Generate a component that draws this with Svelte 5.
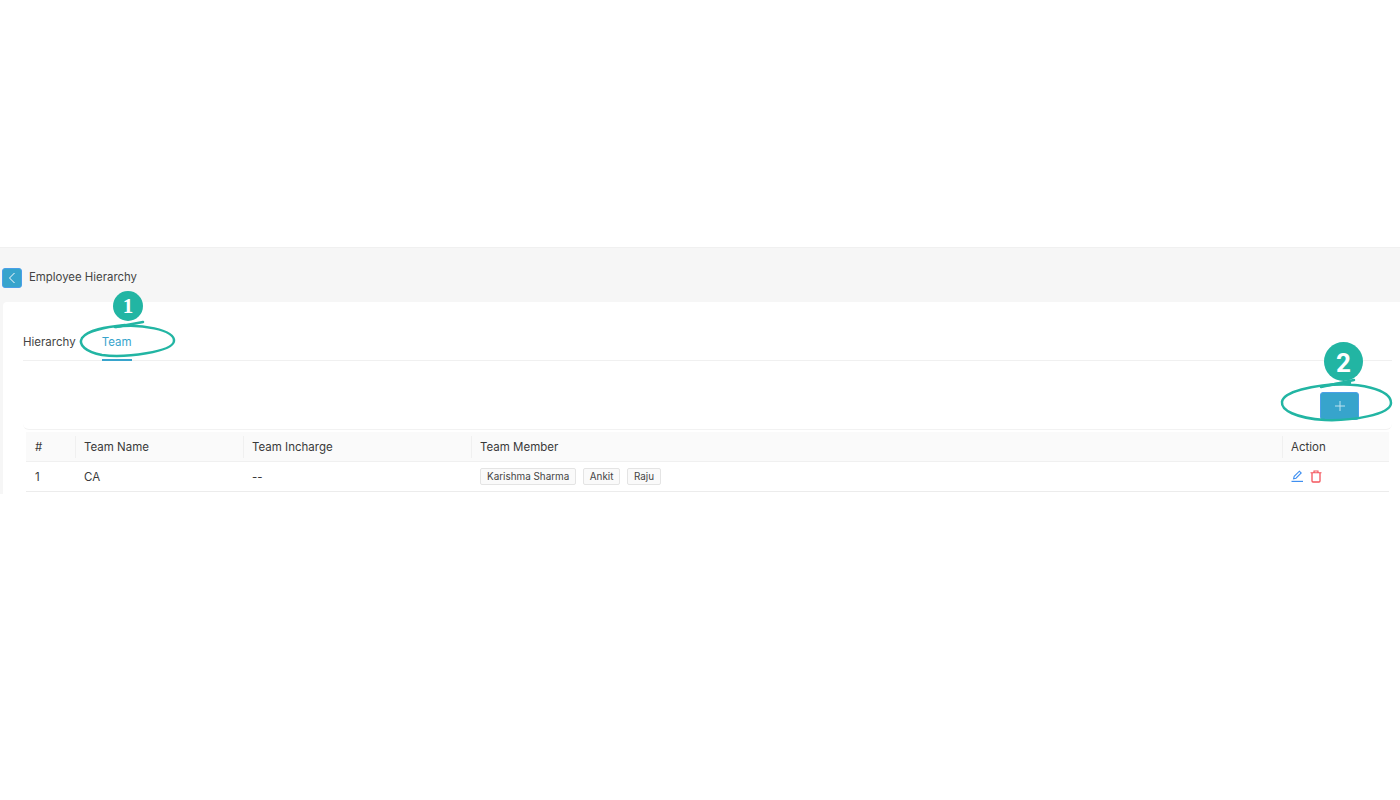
<script>
	const columns = [
		{ label: '#', cls: 'colIndex' },
		{ label: 'Team Name', cls: 'colName' },
		{ label: 'Team Incharge', cls: 'colIncharge' },
		{ label: 'Team Member', cls: 'colMember' },
		{ label: 'Action', cls: 'colAction' }
	];

	const members = ['Karishma Sharma', 'Ankit', 'Raju'];
</script>

<div class="screen">
	<div class="panel">
		<div class="pageHeader">
			<button class="backButton" aria-label="Back">
				<svg width="10" height="12" viewBox="0 0 10 12" fill="none">
					<path d="M7.500 1 L2.500 6 L7.500 11" stroke="#fff" stroke-width="1" />
				</svg>
			</button>
			<span class="pageTitle">Employee Hierarchy</span>
		</div>

		<div class="card">
			<div class="tabs">
				<span class="tab">Hierarchy</span>
				<span class="tab active">Team</span>
			</div>

			<div class="toolbar">
				<button class="addButton" aria-label="Add">
					<svg width="10" height="10" viewBox="0 0 10 10" fill="none">
						<path d="M5 0 V10 M0 5 H10" stroke="#bfe3f0" stroke-width="1" />
					</svg>
				</button>
			</div>

			<div class="table">
				<div class="headRow">
					{#each columns as col}
						<div class="cell {col.cls}">{col.label}</div>
					{/each}
				</div>
				<div class="bodyRow">
					<div class="cell colIndex">1</div>
					<div class="cell colName">CA</div>
					<div class="cell colIncharge">--</div>
					<div class="cell colMember">
						{#each members as member}
							<span class="tag">{member}</span>
						{/each}
					</div>
					<div class="cell colAction">
						<svg width="13" height="13" viewBox="0 0 13 13" fill="none" stroke="#3f8ff0">
							<path d="M2.600 8.700 L3.200 6.400 L8.400 1.200 L10.200 3 L5 8.200 Z" stroke-width="1.100" />
							<path d="M0.500 11.400 H12" stroke-width="1.200" />
						</svg>
						<svg width="12" height="13" viewBox="0 0 12 13" fill="none" stroke="#f4545c">
							<path d="M0.500 2.700 H11.500 M4 2.500 V1 H8 V2.500" stroke-width="1.100" />
							<path d="M2 3 V11 Q2 12 3 12 H9 Q10 12 10 11 V3" stroke-width="1.300" />
						</svg>
					</div>
				</div>
			</div>
		</div>

		<!-- hand drawn callouts sit over the page -->
		<svg class="callouts" width="1400" height="260" viewBox="0 247 1400 260" fill="none" stroke="#22b5a3" stroke-width="2.500" stroke-linecap="round">
			<path d="M115 327 C 140 323 175 330 174 341 C 173 352 125 358 102 355 C 86 352 78 345 82 338 C 88 330 105 327 125 325" />
			<path d="M116 327 L143 322" />
			<path d="M1322 386 C 1360 381 1391 390 1391 403 C 1391 415 1350 421 1325 420 C 1295 418 1281 410 1282 402 C 1283 392 1310 385 1350 383" />
			<path d="M1321 387 L1354 380" />
		</svg>
		<span class="badge badgeOne">1</span>
		<span class="badge badgeTwo">2</span>
	</div>
</div>

<style>
	:global(body) {
		background: #fff;
		font-family: Inter, 'Liberation Sans', sans-serif;
	}

	.screen {
		height: 800px;
		padding-top: 247px;
		box-sizing: border-box;
		overflow: hidden;
	}

	.panel {
		position: relative;
		height: 247px;
		background: #f6f6f6;
		border-top: 1px solid #f0f0f0;
		box-sizing: border-box;
		overflow: hidden;
	}

	.pageHeader {
		display: flex;
		align-items: center;
		gap: 7px;
		height: 54px;
		padding: 5px 0 0 2px;
		box-sizing: border-box;
	}

	.backButton {
		display: flex;
		align-items: center;
		justify-content: center;
		width: 20px;
		height: 20px;
		padding: 0;
		background: #37a4cc;
		border: 1px solid #4a9fe8;
		border-radius: 3px;
	}

	.pageTitle {
		margin-bottom: 1px;
		font-size: 11.400px;
		color: #444;
	}

	.card {
		margin-left: 3px;
		height: 192px;
		padding: 18px 8px 0 20px;
		background: #fff;
		border-radius: 4px 0 0 0;
		box-sizing: border-box;
	}

	.tabs {
		display: flex;
		gap: 26px;
		height: 41px;
		border-bottom: 1px solid #f0f0f0;
		box-sizing: border-box;
		font-size: 11.500px;
		color: #444;
	}

	.tab {
		position: relative;
		padding-top: 15px;
	}

	.tab.active {
		color: #37a4cc;
	}

	.tab.active::after {
		content: '';
		position: absolute;
		left: 0;
		right: 0;
		bottom: -1px;
		height: 2px;
		background: #37a4cc;
	}

	.toolbar {
		display: flex;
		justify-content: flex-end;
		height: 69px;
		padding: 31px 33px 0 0;
		border-bottom: 1px solid #f2f2f2;
		border-radius: 0 0 6px 6px;
		box-sizing: border-box;
	}

	.addButton {
		display: flex;
		align-items: center;
		justify-content: center;
		width: 39px;
		height: 28px;
		padding: 0;
		background: #37a4cc;
		border: 1px solid #4a9fe8;
		border-radius: 3px;
	}

	.table {
		margin: 2px 3px 0;
		font-size: 11.500px;
		color: #3a3a3a;
	}

	.headRow,
	.bodyRow {
		display: flex;
		align-items: center;
	}

	.headRow {
		height: 30px;
		background: #fafafa;
		border-bottom: 1px solid #f0f0f0;
		box-sizing: border-box;
	}

	.headRow .cell + .cell {
		padding-left: 8px;
		border-left: 1px solid #f0f0f0;
	}

	.bodyRow {
		height: 30px;
		border-bottom: 1px solid #ececec;
		box-sizing: border-box;
	}

	.cell {
		display: flex;
		align-items: center;
		gap: 6.500px;
		height: 22px;
		padding-left: 9px;
		box-sizing: border-box;
		flex: none;
	}

	.colIndex { width: 49px; }
	.colName { width: 168px; }
	.colIncharge { width: 228px; }
	.colMember { width: 811px; }
	.colAction { flex: 1; gap: 6px; }

	.tag {
		padding: 1px 6px;
		background: #fafafa;
		border: 1px solid #e4e4e4;
		border-radius: 2px;
		font-size: 9.900px;
		line-height: 13px;
		color: #444;
	}

	.callouts {
		position: absolute;
		top: -1px;
		left: 0;
		pointer-events: none;
	}

	.badge {
		position: absolute;
		display: flex;
		align-items: center;
		justify-content: center;
		background: #22b5a3;
		color: #fff;
		border-radius: 50%;
		font-weight: 700;
	}

	.badgeOne {
		left: 113px;
		top: 43px;
		width: 30px;
		height: 30px;
		font-family: 'Liberation Serif', serif;
		font-size: 21px;
	}

	.badgeTwo {
		left: 1324px;
		top: 94px;
		width: 39px;
		height: 39px;
		padding-top: 3px;
		box-sizing: border-box;
		font-family: Roboto, sans-serif;
		font-size: 26px;
	}
</style>
